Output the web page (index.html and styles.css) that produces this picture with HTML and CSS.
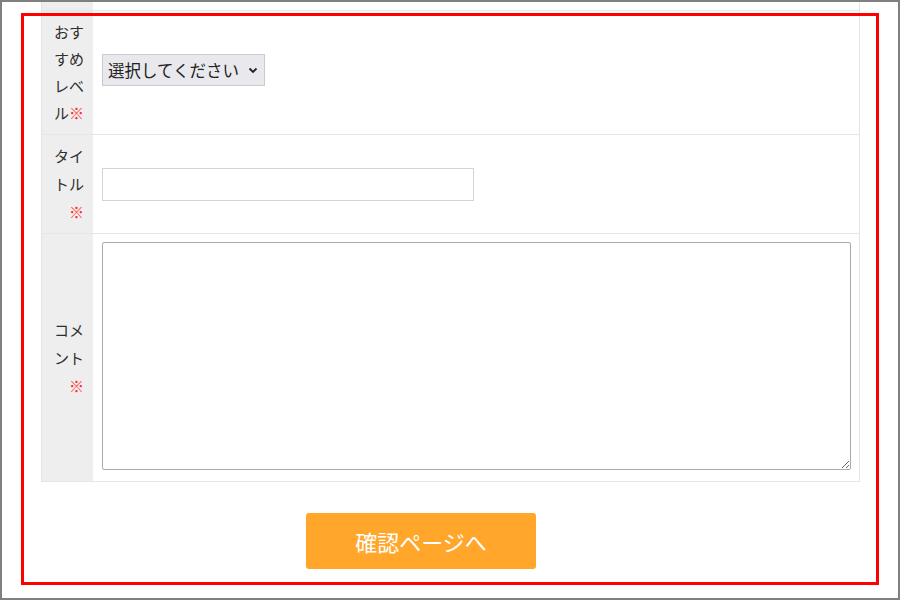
FILE: index.html
```html
<!DOCTYPE html>
<html lang="ja">
<head>
<meta charset="utf-8">
<link rel="stylesheet" href="styles.css">
</head>
<body>
<div class="page">
  <div class="form">
    <div class="row row-top">
      <div class="label"></div>
      <div class="field"></div>
    </div>
    <div class="row row-level">
      <div class="label"><span class="ltext">おす<br>すめ<br>レベ<br>ル<span class="req">※</span></span></div>
      <div class="field">
        <div class="select">
          <span>選択してください</span>
          <svg class="chev" width="10" height="7" viewBox="0 0 10 7"><path d="M1.5 1.5 L5 5 L8.5 1.5" fill="none" stroke="#222" stroke-width="1.8"/></svg>
        </div>
      </div>
    </div>
    <div class="row row-title">
      <div class="label"><span class="ltext">タイ<br>トル<br><span class="req">※</span></span></div>
      <div class="field"><input class="text" type="text"></div>
    </div>
    <div class="row row-comment">
      <div class="label"><span class="ltext">コメ<br>ント<br><span class="req">※</span></span></div>
      <div class="field field-top"><textarea class="area"></textarea></div>
    </div>
  </div>
  <div class="actions">
    <button class="submit" type="button">確認ページへ</button>
  </div>
  <div class="mark"></div>
</div>
</body>
</html>
```

FILE: styles.css
```css
html, body {
  margin: 0;
  padding: 0;
  background: #ffffff;
}

.page {
  position: relative;
  width: 900px;
  height: 600px;
  box-sizing: border-box;
  border: 2px solid #808080;
  overflow: hidden;
  font-family: "Noto Sans CJK JP", "Noto Sans", sans-serif;
  color: #333;
}

.form {
  margin-left: 39px;
  width: 819px;
  box-sizing: border-box;
  border-left: 1px solid #e4e4e4;
  border-right: 1px solid #e4e4e4;
}

.row {
  display: grid;
  grid-template-columns: 51px 1fr;
  grid-template-rows: minmax(0, 1fr);
  border-bottom: 1px solid #e6e6e6;
  box-sizing: border-box;
  overflow: hidden;
}

.row-top { height: 9px; }
.row-level { height: 124px; }
.row-title { height: 99px; }
.row-comment { height: 248px; }

.label {
  background: #eeeeee;
  font-size: 15px;
  line-height: 28px;
  padding: 0 9px 0 9px;
  display: flex;
  align-items: center;
  justify-content: flex-end;
  box-sizing: border-box;
  white-space: nowrap;
  color: #2e2e2e;
}

.ltext {
  display: block;
  text-align: right;
}

.row-level .label {
  line-height: 27px;
  padding-bottom: 2px;
}

.req {
  color: #ff2a2a;
}

.field {
  display: flex;
  align-items: center;
  padding-left: 9px;
  padding-right: 8px;
}

.row-level .field {
  padding-bottom: 6px;
}

.field-top {
  align-items: flex-start;
  padding-top: 8px;
}

.select {
  display: flex;
  align-items: center;
  gap: 9px;
  height: 32px;
  width: 163px;
  box-sizing: border-box;
  padding: 0 6px 0 5px;
  background: #e9e9ed;
  border: 1px solid #c9c9cf;
  font-size: 16.5px;
  color: #222;
}

.chev {
  margin-top: 1px;
}

.text {
  width: 372px;
  height: 33px;
  box-sizing: border-box;
  border: 1px solid #d4d4d4;
  background: #fff;
  margin: 0;
}

.area {
  display: block;
  width: 749px;
  height: 228px;
  box-sizing: border-box;
  border: 1px solid #a9a9b4;
  border-radius: 2px;
  margin: 0;
  resize: both;
  font-family: "Noto Sans CJK JP", sans-serif;
}

.actions {
  padding-top: 31px;
  padding-left: 304px;
}

.submit {
  width: 230px;
  height: 56px;
  border: none;
  border-radius: 3px;
  background: #ffa62b;
  color: #ffffff;
  font-family: "Noto Sans CJK JP", "Noto Sans", sans-serif;
  font-size: 22px;
  font-weight: 400;
  padding: 0;
}

.mark {
  position: absolute;
  left: 19px;
  top: 11px;
  width: 858px;
  height: 572px;
  box-sizing: border-box;
  border: 3px solid #ff0000;
  pointer-events: none;
}
```
